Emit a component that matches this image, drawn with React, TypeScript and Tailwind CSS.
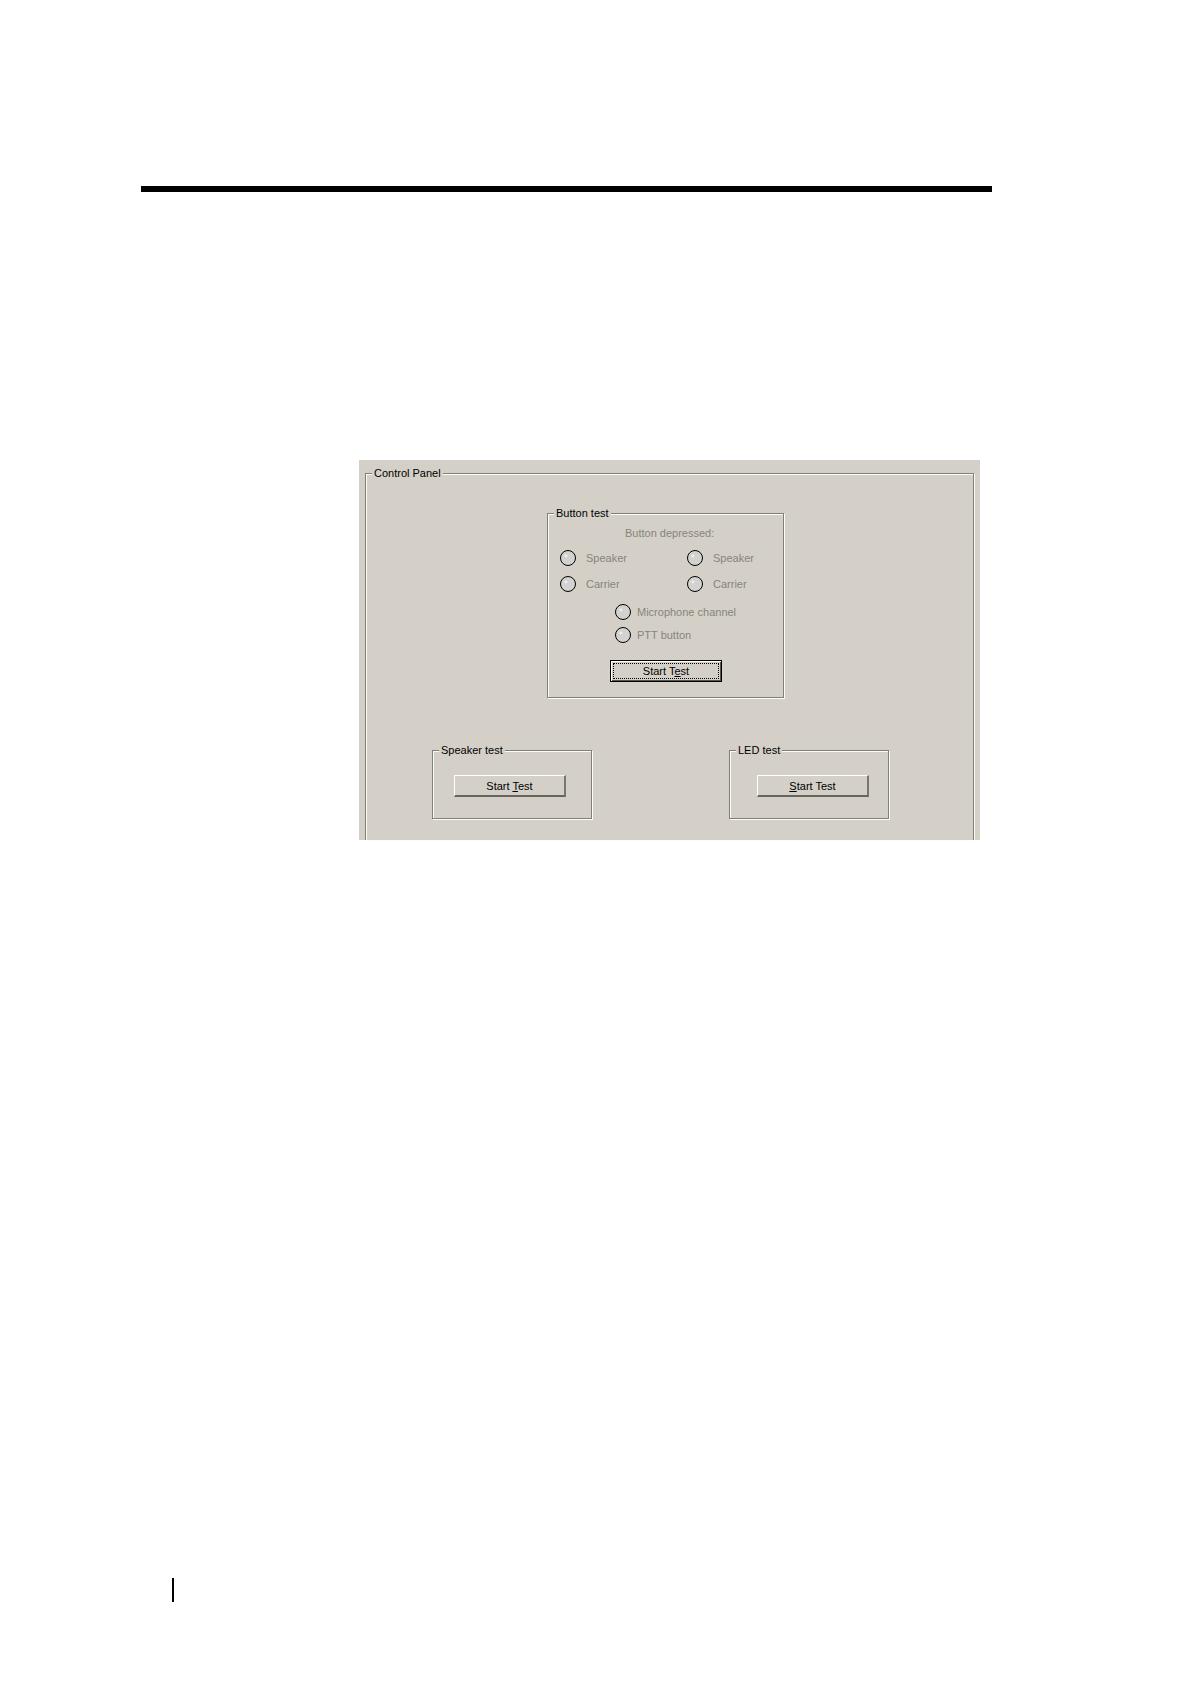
import type { ReactNode } from "react";

const channels = [
  { id: "left", items: ["Speaker", "Carrier"] },
  { id: "right", items: ["Speaker", "Carrier"] },
];

const extraSignals = ["Microphone channel", "PTT button"];

const etched =
  "min-w-0 border border-[#808078] shadow-[1px_1px_0_#fdfdf8,inset_1px_1px_0_#fdfdf8]";

type GroupBoxProps = {
  title: string;
  className: string;
  children: ReactNode;
};

const GroupBox = ({ title, className, children }: GroupBoxProps) => (
  <fieldset className={`${etched} ${className}`}>
    <legend className="ml-1.5 h-3.5 bg-[#d4d0c8] px-0.5 leading-3.5">
      {title}
    </legend>
    {children}
  </fieldset>
);

const Lamp = ({ id, label, gap }: { id: string; label: string; gap: string }) => (
  <div className={`flex items-center ${gap}`}>
    <input
      id={id}
      type="radio"
      disabled
      className="size-4 shrink-0 appearance-none rounded-full border border-black bg-[radial-gradient(circle_at_35%_35%,#ffffff_0,#d2d2d0_2px)]"
    />
    <label htmlFor={id} className="text-[#87847d]">
      {label}
    </label>
  </div>
);

const TestButton = ({ children }: { children: ReactNode }) => (
  <button
    type="button"
    className="block h-[22px] w-28 border-t border-r-2 border-b-2 border-l border-t-white border-r-[#77776f] border-b-[#66665e] border-l-white bg-[#d4d0c8] leading-4"
  >
    {children}
  </button>
);

const App = () => {
  return (
    <div className="flex min-h-screen flex-col bg-white pt-[186px] pr-[198px] pb-[82px] pl-[141px] font-['Liberation_Sans',Arial,sans-serif] text-[11px] leading-3.5 text-black">
      <hr className="h-1.5 border-0 bg-black" />

      <main className="mt-[268px] mr-3 ml-[218px] bg-[#d4d0c8] px-1.5 pt-1.5">
        <GroupBox title="Control Panel" className="border-b-0 pb-[21px]">
          <div className="mt-[26px] flex justify-center pr-2">
            <GroupBox title="Button test" className="w-[237px] pb-[15px]">
              <p className="mt-1.5 pl-[77px] text-[#87847d]">
                Button depressed:
              </p>
              <div className="mt-2.5 grid grid-cols-[127px_1fr] pl-3">
                {channels.map((channel) => (
                  <div key={channel.id} className="flex flex-col gap-2.5">
                    {channel.items.map((item) => (
                      <Lamp
                        key={item}
                        id={`${channel.id}-${item}`}
                        label={item}
                        gap="gap-2.5"
                      />
                    ))}
                  </div>
                ))}
              </div>
              <div className="mt-3 flex flex-col gap-[7px] pl-[67px]">
                {extraSignals.map((item) => (
                  <Lamp key={item} id={item} label={item} gap="gap-1.5" />
                ))}
              </div>
              {/* default button, drawn with keyboard focus */}
              <button
                type="button"
                className="mt-[17px] ml-[62px] block h-[22px] w-28 border border-black bg-[#d4d0c8] p-0.5 shadow-[inset_1px_1px_0_#fff,inset_-1px_-1px_0_#55554f]"
              >
                <span className="block h-full border border-dotted border-black leading-3.5">
                  Start T<u>e</u>st
                </span>
              </button>
            </GroupBox>
          </div>

          <div className="mt-[45px] flex justify-between pr-[84px] pl-[66px]">
            <GroupBox title="Speaker test" className="w-40 pb-[21px]">
              <div className="mt-[18px] pl-[21px]">
                <TestButton>
                  Start <u>T</u>est
                </TestButton>
              </div>
            </GroupBox>
            <GroupBox title="LED test" className="w-40 pb-[21px]">
              <div className="mt-[18px] pl-[27px]">
                <TestButton>
                  <u>S</u>tart Test
                </TestButton>
              </div>
            </GroupBox>
          </div>
        </GroupBox>
      </main>

      <footer className="mt-auto ml-[31px] h-6 border-l-2 border-black" />
    </div>
  );
};

export default App;
